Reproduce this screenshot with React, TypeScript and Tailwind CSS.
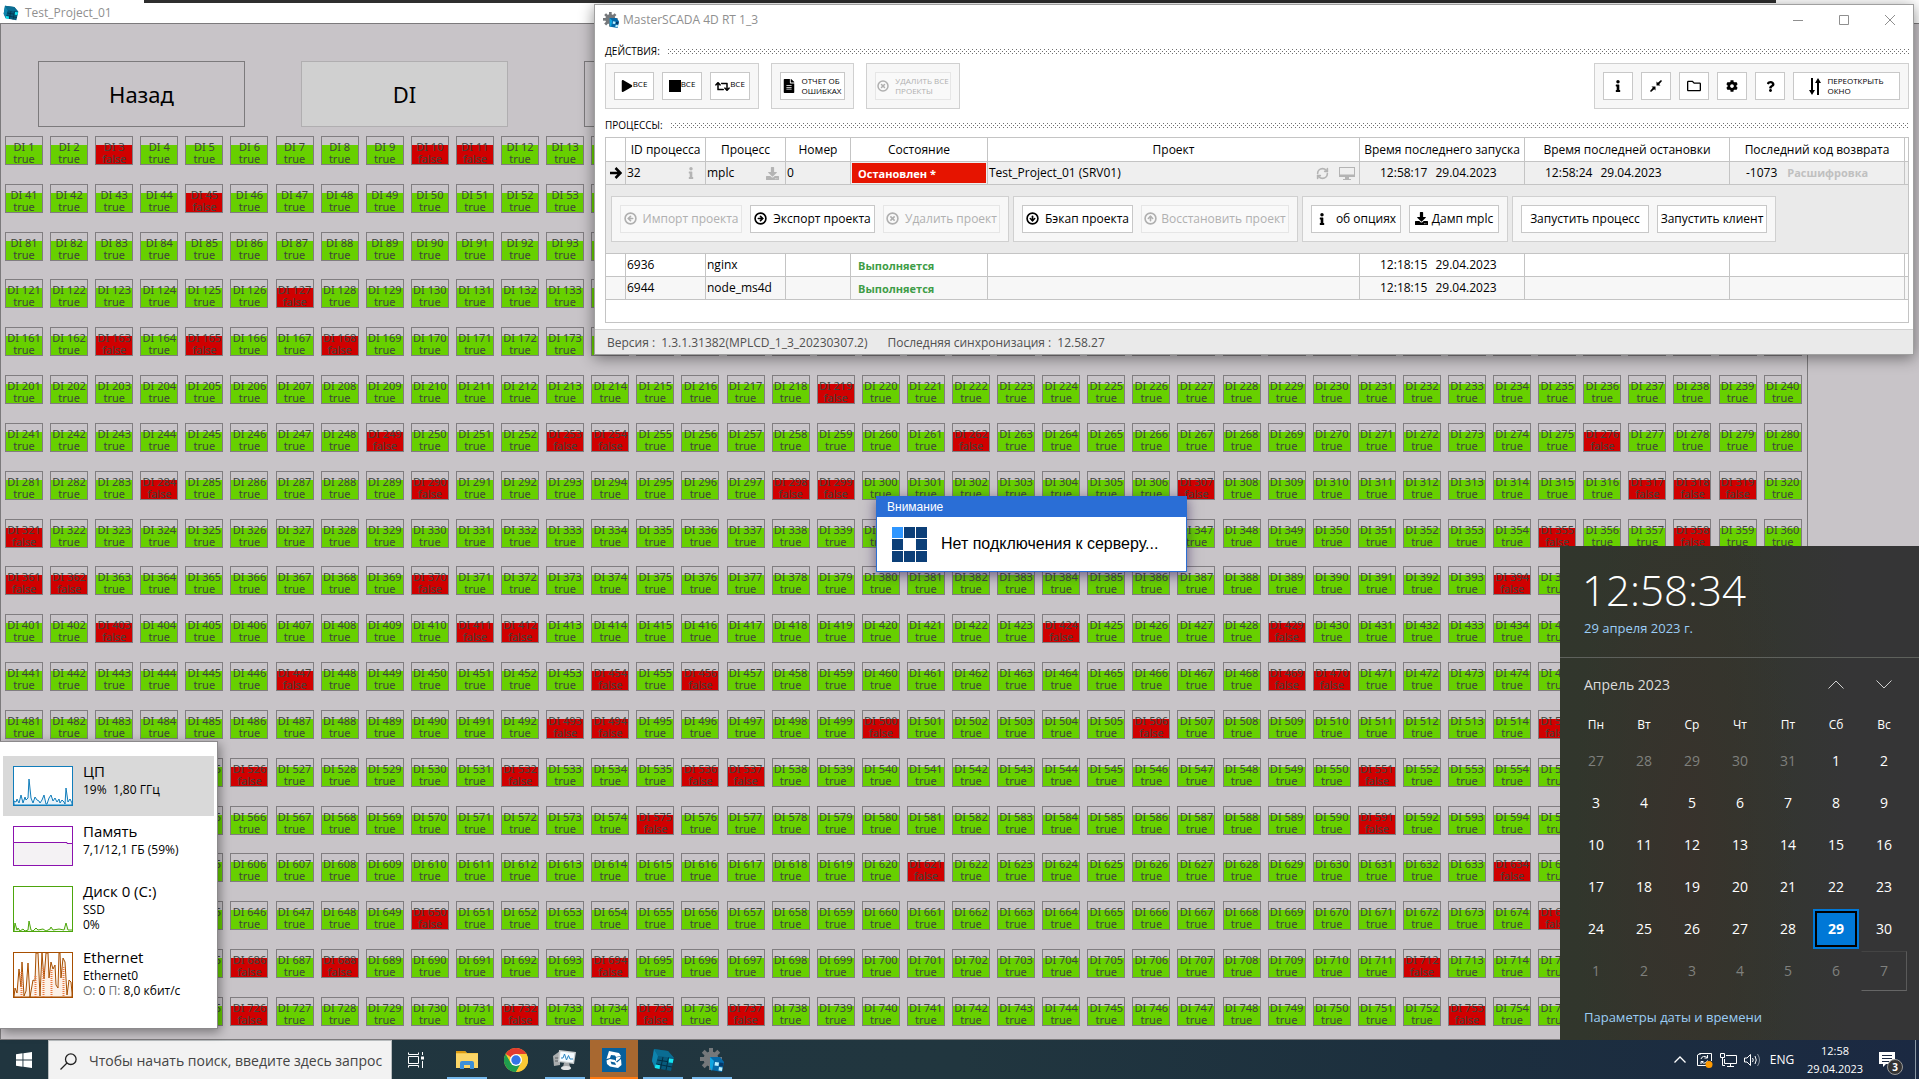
import React from "react";
import { CircleArrowDown, CircleArrowLeft, CircleArrowRight, CircleArrowUp, CircleX, RefreshCw } from "lucide-react";
import { FaCog, FaDownload, FaFileAlt, FaInfo, FaPlay, FaQuestion, FaRegFolder, FaRetweet } from "react-icons/fa";

const FALSE_INPUTS = new Set([
  3, 10, 11, 45, 127, 163, 165, 168, 176, 178, 181, 193, 196, 219, 249, 253, 254, 262, 276, 284, 290, 298, 299, 307,
  317, 318, 319, 321, 355, 358, 361, 362, 370, 394, 403, 411, 412, 424, 429, 447, 454, 456, 469, 470, 493, 494, 500,
  506, 515, 526, 532, 536, 537, 551, 575, 591, 621, 634, 650, 675, 686, 688, 694, 712, 726, 732, 735, 737, 753,
]);

const ROWS = Array.from({ length: 19 }, (_, r) => Array.from({ length: 40 }, (_, c) => r * 40 + c + 1));

function InputCell({ n }: { n: number }) {
  const off = FALSE_INPUTS.has(n);
  return (
    <div
      className={
        "flex h-[29px] w-[38px] flex-col items-center whitespace-nowrap border border-[#807d80] pt-1 text-[11px] leading-3 text-[#40443c] " +
        (off
          ? "bg-[linear-gradient(to_bottom,#c8c4c8_8px,#d00000_8px)]"
          : "bg-[linear-gradient(to_bottom,#c8c4c8_8px,#67d000_8px)]")
      }
    >
      <span>DI {n}</span>
      <span>{off ? "false" : "true"}</span>
    </div>
  );
}

function CubeIcon({ className }: { className: string }) {
  return (
    <svg viewBox="0 0 24 24" className={className} aria-hidden="true">
      <path d="M3 1 L17 3 L23 10 L20 23 L4 20 L1 13Z" fill="#075a7c" />
      <path d="M3 1 L17 3 L23 10 L7 8Z" fill="#0a6d93" />
      <path d="M3 1 L7 8 L4 20 L1 13Z" fill="#0e84ad" />
      <path d="M6.300 12 L22 14.500 M5.200 16 L21 19 M12 9 L9.500 21 M17.500 9.500 L15 22" stroke="#022f45" strokeWidth="1" />
      <path d="M18 10.500 L22.500 11 L21.800 15 L17.500 14.500Z M4.500 16.500 L9 17.300 L8.500 21 L3.800 20Z" fill="#16e6f2" />
    </svg>
  );
}

function GearCubeIcon({ className }: { className: string }) {
  return (
    <svg viewBox="0 0 24 24" className={className} aria-hidden="true">
      <g fill="#75787b">
        <circle cx="11" cy="11" r="7.500" />
        {[0, 45, 90, 135, 180, 225, 270, 315].map((a) => (
          <rect key={a} x="9" y="0" width="4" height="6" transform={`rotate(${a} 11 11)`} />
        ))}
      </g>
      <path d="M10 9 L20 9 L24 14 L22 24 L11 22Z" fill="#0669a8" />
      <path d="M10 9 L14 13 L12 23 L10 20Z" fill="#10a5e0" />
      <path d="M15 14 L19 14.500 L18.500 18 L14.500 17.500Z M19 19 L22.500 19.500 L22 23 L18.500 22.500Z" fill="#b9efff" />
      <path d="M19.500 14.500 L23.500 15 L23 18.500 L19 18Z" fill="#053a6b" />
    </svg>
  );
}

function Dots({ id }: { id: string }) {
  return (
    <svg className="h-[5px] flex-1" aria-hidden="true">
      <pattern id={id} width="4" height="4" patternUnits="userSpaceOnUse">
        <rect x="0" y="0" width="1" height="1" fill="#6f6f6f" />
        <rect x="2" y="2" width="1" height="1" fill="#6f6f6f" />
      </pattern>
      <rect width="100%" height="5" fill={`url(#${id})`} />
    </svg>
  );
}

function Section({ title, id }: { title: string; id: string }) {
  return (
    <div className="flex h-4 items-center gap-2">
      <h2 className="text-[10px] leading-4 text-black">{title}</h2>
      <Dots id={id} />
    </div>
  );
}

function Group({ children, className = "" }: { children: React.ReactNode; className?: string }) {
  return (
    <div className={"flex h-[46px] items-center gap-2 border border-[#d0d0d0] bg-[#f7f7f7] px-2 " + className}>{children}</div>
  );
}

function Btn({
  children,
  className = "",
  disabled = false,
  label,
}: {
  children: React.ReactNode;
  className?: string;
  disabled?: boolean;
  label?: string;
}) {
  return (
    <button
      type="button"
      disabled={disabled}
      aria-label={label}
      className={
        "flex h-7 shrink-0 items-center justify-center whitespace-nowrap border " +
        (disabled ? "border-[#e6e6e6] bg-[#f9f9f9] text-[#b0b0b0] " : "border-[#c8c8c8] bg-white text-black ") +
        className
      }
    >
      {children}
    </button>
  );
}

function Toolbar() {
  return (
    <div className="flex gap-3 pt-1">
      <Group>
        <Btn className="w-10">
          <FaPlay className="size-3" />
          <span className="pb-1 text-[8px]">ВСЕ</span>
        </Btn>
        <Btn className="w-10">
          <span className="size-3 bg-black" />
          <span className="pb-1 text-[8px]">ВСЕ</span>
        </Btn>
        <Btn className="w-10">
          <FaRetweet className="size-[15px]" />
          <span className="pb-1 text-[8px]">ВСЕ</span>
        </Btn>
      </Group>
      <Group>
        <Btn className="w-[65px] gap-1.5">
          <FaFileAlt className="h-3.5 w-3" />
          <span className="text-left text-[8px] leading-[10px]">
            ОТЧЕТ ОБ
            <br />
            ОШИБКАХ
          </span>
        </Btn>
      </Group>
      <Group className="mr-auto">
        <Btn disabled className="w-[76px] gap-1.5">
          <CircleX className="size-3" strokeWidth={3} />
          <span className="text-left text-[8px] leading-[10px]">
            УДАЛИТЬ ВСЕ
            <br />
            ПРОЕКТЫ
          </span>
        </Btn>
      </Group>
      <Group>
        <Btn label="Информация" className="w-[30px]">
          <FaInfo className="size-3" />
        </Btn>
        <Btn label="Свернуть" className="w-[30px]">
          <svg viewBox="0 0 12 12" className="size-3" aria-hidden="true">
            <path d="M6.500 1.500 V5.500 H10.500 L9.200 4.200 L12 1 L11 0 L7.800 2.800Z M5.500 10.500 V6.500 H1.500 L2.800 7.800 L0 11 L1 12 L4.200 9.200Z" />
          </svg>
        </Btn>
        <Btn label="Папка" className="w-[30px]">
          <FaRegFolder className="size-3.5" />
        </Btn>
        <Btn label="Настройки" className="w-[30px]">
          <FaCog className="size-3" />
        </Btn>
        <Btn label="Справка" className="w-[30px]">
          <FaQuestion className="size-[11px]" />
        </Btn>
        <Btn className="w-[107px] gap-1.5">
          <svg viewBox="0 0 12 17" className="h-[17px] w-3" aria-hidden="true">
            <path d="M2 0 H4 V12 H6 L3 17 L0 12 H2Z M8 17 H10 V5 H12 L9 0 L6 5 H8Z" />
          </svg>
          <span className="text-left text-[8px] leading-[10px]">
            ПЕРЕОТКРЫТЬ
            <br />
            ОКНО
          </span>
        </Btn>
      </Group>
    </div>
  );
}

function ProcessTable() {
  const cell = "border-r border-b border-[#c4c4c4] p-0 ";
  const others = [
    { id: "6936", name: "nginx", bg: "bg-white" },
    { id: "6944", name: "node_ms4d", bg: "bg-[#f7f7f7]" },
  ];
  return (
    <div className="h-[186px] border border-[#c4c4c4] bg-white">
      <table className="w-full table-fixed border-separate border-spacing-0 text-[12px] leading-4 text-black">
        <colgroup>
          <col className="w-5" />
          <col className="w-20" />
          <col className="w-20" />
          <col className="w-[65px]" />
          <col className="w-[137px]" />
          <col />
          <col className="w-[165px]" />
          <col className="w-[205px]" />
          <col className="w-[175px]" />
          <col className="w-[3px]" />
        </colgroup>
        <thead>
          <tr className="h-6">
            {["", "ID процесса", "Процесс", "Номер", "Состояние", "Проект", "Время последнего запуска", "Время последней остановки", "Последний код возврата"].map(
              (h) => (
                <th key={h} className={cell + "whitespace-nowrap text-center font-normal"}>
                  {h}
                </th>
              ),
            )}
            <th className="border-b border-[#c4c4c4] p-0" />
          </tr>
        </thead>
        <tbody>
          <tr className="h-[23px] bg-[#efefef]">
            <td className={cell}>
              <svg viewBox="0 0 12 12" className="ml-1 size-3" aria-hidden="true">
                <path d="M0 6 H10 M5.500 1 L10.500 6 L5.500 11" fill="none" stroke="#000" strokeWidth="2.500" />
              </svg>
            </td>
            <td className={cell}>
              <div className="flex items-center justify-between pl-px pr-2">
                32 <FaInfo className="size-3 text-[#b4b4b4]" />
              </div>
            </td>
            <td className={cell}>
              <div className="flex items-center justify-between pl-px pr-1.5">
                mplc <FaDownload className="size-[13px] text-[#b4b4b4]" />
              </div>
            </td>
            <td className={cell}>
              <div className="pl-px">0</div>
            </td>
            <td className={cell}>
              <div className="mx-px flex h-5 items-center bg-[#e61400] pl-1.5 pt-0.5 text-[11px] font-bold text-white">
                Остановлен *
              </div>
            </td>
            <td className={cell}>
              <div className="flex items-center pl-px pr-1">
                <span className="mr-auto">Test_Project_01 (SRV01)</span>
                <RefreshCw className="mr-2.5 size-[13px] text-[#b4b4b4]" strokeWidth={3} />
                <svg viewBox="0 0 16 13" className="h-[13px] w-4" fill="#b4b4b4" aria-hidden="true">
                  <path fillRule="evenodd" d="M0 0 H16 V10 H0Z M1 1 V7.500 H15 V1Z" />
                  <path d="M6 10 H10 V12 H12 V13 H4 V12 H6Z" />
                </svg>
              </div>
            </td>
            <td className={cell}>
              <div className="flex gap-2 pl-5">
                <span>12:58:17</span>
                <span>29.04.2023</span>
              </div>
            </td>
            <td className={cell}>
              <div className="flex gap-2 pl-5">
                <span>12:58:24</span>
                <span>29.04.2023</span>
              </div>
            </td>
            <td className={cell}>
              <div className="flex gap-2.5 pl-4">
                <span>-1073</span>
                <span className="text-[11px] font-bold text-[#c0c0c0]">Расшифровка</span>
              </div>
            </td>
            <td className="border-b border-[#c4c4c4] p-0" />
          </tr>
          <tr className="h-[69px]">
            <td colSpan={10} className="border-b border-[#c4c4c4] bg-[#eaeaea] p-0">
              <div className="flex gap-1 pb-px pl-[5px]">
                <Group>
                  <Btn disabled className="w-[122px] gap-1.5">
                    <CircleArrowLeft className="size-[13px]" strokeWidth={3} />
                    Импорт проекта
                  </Btn>
                  <Btn className="w-[125px] gap-1.5">
                    <CircleArrowRight className="size-[13px]" strokeWidth={3} />
                    Экспорт проекта
                  </Btn>
                  <Btn disabled className="w-[117px] gap-1.5">
                    <CircleX className="size-[13px]" strokeWidth={3} />
                    Удалить проект
                  </Btn>
                </Group>
                <Group>
                  <Btn className="w-[111px] gap-1.5">
                    <CircleArrowDown className="size-[13px]" strokeWidth={3} />
                    Бэкап проекта
                  </Btn>
                  <Btn disabled className="w-[148px] gap-1">
                    <CircleArrowUp className="size-[13px]" strokeWidth={3} />
                    Восстановить проект
                  </Btn>
                </Group>
                <Group>
                  <Btn className="w-[90px] gap-2">
                    <FaInfo className="size-3" />
                    об опциях
                  </Btn>
                  <Btn className="w-[90px] gap-1">
                    <FaDownload className="size-[13px]" />
                    Дамп mplc
                  </Btn>
                </Group>
                <Group>
                  <Btn className="w-32">Запустить процесс</Btn>
                  <Btn className="w-[110px]">Запустить клиент</Btn>
                </Group>
              </div>
            </td>
          </tr>
          {others.map((p) => (
            <tr key={p.id} className={"h-[23px] " + p.bg}>
              <td className={cell} />
              <td className={cell}>
                <div className="pl-px">{p.id}</div>
              </td>
              <td className={cell}>
                <div className="pl-px">{p.name}</div>
              </td>
              <td className={cell} />
              <td className={cell}>
                <div className="pl-[7px] pt-0.5 text-[11px] font-bold text-[#3f9d48]">Выполняется</div>
              </td>
              <td className={cell} />
              <td className={cell}>
                <div className="flex gap-2 pl-5">
                  <span>12:18:15</span>
                  <span>29.04.2023</span>
                </div>
              </td>
              <td className={cell} />
              <td className={cell} />
              <td className="border-b border-[#c4c4c4] p-0" />
            </tr>
          ))}
        </tbody>
      </table>
    </div>
  );
}

function RuntimeWindow() {
  return (
    <section className="absolute left-[594px] right-[5px] top-1 border border-[#a0a0a0] bg-white shadow-[0_3px_14px_rgba(0,0,0,0.45)]">
      <header className="flex h-[30px] items-center pl-2">
        <GearCubeIcon className="size-4" />
        <h1 className="mr-auto pl-1 text-[12px] leading-4 text-[#8f8f8f]">MasterSCADA 4D RT 1_3</h1>
        <button type="button" aria-label="Свернуть окно" className="flex h-7 w-[46px] items-center justify-center">
          <svg viewBox="0 0 10 10" className="size-2.5" stroke="#8f8f8f">
            <path d="M0 5.500 H10" />
          </svg>
        </button>
        <button type="button" aria-label="Развернуть окно" className="flex h-7 w-[46px] items-center justify-center">
          <svg viewBox="0 0 10 10" className="size-2.5" stroke="#8f8f8f" fill="none">
            <path d="M0.500 0.500 H9.500 V9.500 H0.500Z" />
          </svg>
        </button>
        <button type="button" aria-label="Закрыть окно" className="flex h-7 w-[46px] items-center justify-center">
          <svg viewBox="0 0 10 10" className="size-2.5" stroke="#8f8f8f">
            <path d="M0 0 L10 10 M10 0 L0 10" />
          </svg>
        </button>
      </header>
      <div className="px-[10px] pb-1.5 pr-1 pt-2">
        <Section title="ДЕЙСТВИЯ:" id="dots-actions" />
        <Toolbar />
        <div className="pb-1 pt-2">
          <Section title="ПРОЦЕССЫ:" id="dots-processes" />
        </div>
        <ProcessTable />
      </div>
      <footer className="flex h-[25px] items-center gap-5 border-t border-[#d0d0d0] bg-[#eaeaea] pl-3 pt-px text-[12px] leading-4 text-[#505050]">
        <span className="flex gap-1.5">
          <span>Версия :</span>
          <span>1.3.1.31382(MPLCD_1_3_20230307.2)</span>
        </span>
        <span className="flex gap-1.5">
          <span>Последняя синхронизация :</span>
          <span>12.58.27</span>
        </span>
      </footer>
    </section>
  );
}

function AlertDialog() {
  return (
    <section
      role="dialog"
      aria-label="Внимание"
      className="absolute left-[876px] top-[496px] w-[311px] border border-[#2a6ed4] bg-white font-['Liberation_Sans',sans-serif] shadow-[0_3px_12px_rgba(40,20,80,0.6)]"
    >
      <h2 className="h-5 bg-[#2a6ed6] pl-[10px] text-[12px] leading-5 text-white">Внимание</h2>
      <div className="flex h-[54px] items-center gap-[14px] pl-[15px]">
        <div className="grid grid-cols-3 gap-px">
          {Array.from({ length: 9 }, (_, i) => (
            <span key={i} className={"size-[11px] " + (i === 0 ? "bg-[#2e96ff]" : i === 4 ? "bg-white" : "bg-[#0c3f78]")} />
          ))}
        </div>
        <p className="text-[16px] leading-5 text-black">Нет подключения к серверу...</p>
      </div>
    </section>
  );
}

function Metric({
  title,
  lines,
  chart,
  className = "",
}: {
  title: string;
  lines: React.ReactNode[];
  chart: React.ReactNode;
  className?: string;
}) {
  return (
    <div className={"mx-[3px] flex gap-[10px] pl-[10px] " + className}>
      <div className="pt-[10px]">{chart}</div>
      <div className="pt-1">
        <h3 className="text-[15px] leading-[22px] text-black">{title}</h3>
        {lines.map((l, i) => (
          <p key={i} className="whitespace-pre text-[12px] leading-[15px] text-black">
            {l}
          </p>
        ))}
      </div>
    </div>
  );
}

function PerformancePanel() {
  return (
    <section className="absolute bottom-[50px] left-0 h-[288px] w-[218px] border border-l-0 border-[#8c8a8c] bg-white pt-[14px] shadow-[2px_3px_10px_rgba(0,0,0,0.4)]">
      <Metric
        title="ЦП"
        lines={["19%  1,80 ГГц"]}
        className="h-[60px] bg-[#d9d9d9]"
        chart={
          <svg viewBox="0 0 60 40" className="h-10 w-[60px]" stroke="#117dbb">
            <rect x="0.500" y="0.500" width="59" height="39" fill="#fff" />
            <path
              fill="#e8f3fa"
              d="M1 39 L1 35 L3 36 L4 33 L6 37 L8 29 L10 37 L12 31 L13 34 L15 32 L16 13 L18 32 L20 37 L22 31 L24 34 L26 35 L27 37 L29 34 L31 29 L33 38 L34 38 L36 32 L38 29 L40 35 L42 32 L44 36 L46 33 L47 37 L49 34 L51 36 L52 38 L53 22 L55 36 L57 33 L59 37 L59 39Z"
            />
          </svg>
        }
      />
      <Metric
        title="Память"
        lines={["7,1/12,1 ГБ (59%)"]}
        className="h-[60px]"
        chart={
          <svg viewBox="0 0 60 40" className="h-10 w-[60px]" stroke="#8b12ae">
            <rect x="0.500" y="0.500" width="59" height="39" fill="#fff" />
            <path fill="#f4f2f4" d="M0.500 39.500 V16.500 H54 V17.500 H59.500 V39.500Z" />
          </svg>
        }
      />
      <Metric
        title="Диск 0 (C:)"
        lines={["SSD", "0%"]}
        className="h-[66px]"
        chart={
          <svg viewBox="0 0 60 46" className="h-[46px] w-[60px]" stroke="#4da60c">
            <rect x="0.500" y="0.500" width="59" height="45" fill="#fff" />
            <path
              fill="#eaf5e0"
              d="M1 45 L2 37 L4 44 L5 42 L7 45 L10 43 L12 45 L15 44 L16 35 L18 44 L20 45 L23 42 L25 44 L30 43 L33 45 L37 43 L38 41 L40 44 L46 43 L51 44 L53 37 L55 44 L59 44"
            />
          </svg>
        }
      />
      <Metric
        title="Ethernet"
        lines={[
          "Ethernet0",
          <>
            <span className="text-[#707070]">О:</span> 0 <span className="text-[#707070]">П:</span> 8,0 кбит/с
          </>,
        ]}
        className="h-[66px]"
        chart={
          <svg viewBox="0 0 60 46" className="h-[46px] w-[60px]" stroke="#a74f01">
            <rect x="0.500" y="0.500" width="59" height="45" fill="#fff" />
            <path
              fill="#fcf0e6"
              d="M1 45 L2 36 L4 41 L6 17 L8 35 L9 10 L11 44 L13 39 L15 11 L17 45 L20 28 L22 29 L23 1 L25 1 L27 44 L29 1 L31 27 L33 1 L35 1 L36 26 L38 10 L40 17 L42 13 L43 33 L45 36 L46 1 L47 1 L48 26 L50 6 L52 10 L54 43 L56 28 L58 30 L59 41 L59 45Z"
            />
            <path stroke="#e87a44" strokeDasharray="1 1" strokeWidth="2" d="M8.500 20 V45 M22.500 24 V45 M30.500 16 V45 M38.500 18 V45 M50.500 15 V45" />
          </svg>
        }
      />
    </section>
  );
}

const DAYS = Array.from({ length: 42 }, (_, i) => {
  const offset = i - 4;
  if (offset <= 0) return { n: 31 + offset, other: true };
  if (offset > 30) return { n: offset - 30, other: true };
  return { n: offset, other: false };
});

function Calendar() {
  return (
    <section className="absolute bottom-[39px] right-0 h-[494px] w-[359px] bg-[#333434] bg-[radial-gradient(ellipse_110px_420px_at_125px_300px,#38322c,transparent),linear-gradient(to_right,#31362c_0%,#32362d_45%,#353536_80%)] text-white">
      <div className="h-28 border-b border-[#5e615c] pl-[22px] pt-[18px]">
        <p className="text-[42px] leading-[52px] font-light">12:58:34</p>
        <a href="#date" className="block pl-0.5 pt-0.5 text-[13px] leading-5 text-[#9bcdf5]">
          29 апреля 2023 г.
        </a>
      </div>
      <div className="flex h-[53px] items-center pl-6 pr-[11px]">
        <h2 className="mr-auto text-[14px] leading-5 text-[#dcdcdc]">Апрель 2023</h2>
        <button type="button" aria-label="Предыдущий месяц" className="flex h-10 w-12 items-center justify-center">
          <svg viewBox="0 0 16 9" className="h-[9px] w-4" fill="none" stroke="#d0d0d0">
            <path d="M0.500 8.500 L8 1 L15.500 8.500" />
          </svg>
        </button>
        <button type="button" aria-label="Следующий месяц" className="flex h-10 w-12 items-center justify-center">
          <svg viewBox="0 0 16 9" className="h-[9px] w-4" fill="none" stroke="#d0d0d0">
            <path d="M0.500 0.500 L8 8 L15.500 0.500" />
          </svg>
        </button>
      </div>
      <div className="grid grid-cols-7 gap-0.5 pl-[13px] pr-3">
        {["Пн", "Вт", "Ср", "Чт", "Пт", "Сб", "Вс"].map((d) => (
          <span key={d} className="flex h-7 items-center justify-center text-[12px] leading-4">
            {d}
          </span>
        ))}
        {DAYS.map((d, i) => (
          <button
            key={i}
            type="button"
            className={
              "h-10 text-[14px] leading-5 " +
              (i === 33
                ? "border-2 border-[#0078d7] bg-[#0078d7] font-bold outline-2 -outline-offset-4 outline-black"
                : d.other
                  ? "text-[#7f807d] "
                  : "text-white ") +
              (i === 41 ? "border border-b-[#666] border-l-transparent border-r-[#5a5a5a] border-t-[#444]" : "")
            }
          >
            {d.n}
          </button>
        ))}
      </div>
      <a href="#settings" className="block pl-6 pt-4 text-[13px] leading-5 text-[#9bcdf5]">
        Параметры даты и времени
      </a>
    </section>
  );
}

function TaskButton({ label, state = "open", children }: { label: string; state?: "open" | "idle" | "alert"; children: React.ReactNode }) {
  return (
    <button
      type="button"
      aria-label={label}
      className={
        "relative flex h-full w-12 items-center justify-center " +
        (state === "alert" ? "border-b-2 border-[#ff7a10] bg-[#a86830] pt-0.5" : "")
      }
    >
      {children}
      {state === "open" && <span className="absolute inset-x-1 bottom-0 h-0.5 bg-[#76b9ed]" />}
    </button>
  );
}

function Taskbar() {
  return (
    <footer className="flex h-[39px] shrink-0 items-stretch bg-[linear-gradient(to_right,#20353f,#21363f_50%,#1c2f3e_75%,#1b2942)] text-white">
      <button type="button" aria-label="Пуск" className="flex w-12 items-center justify-center">
        <svg viewBox="0 0 16 16" className="size-4" fill="#fff">
          <path d="M0 2.200 L6.500 1.300 V7.600 H0Z M7.400 1.200 L16 0 V7.600 H7.400Z M0 8.400 H6.500 V14.700 L0 13.800Z M7.400 8.400 H16 V16 L7.400 14.800Z" />
        </svg>
      </button>
      <label className="flex w-[344px] items-center gap-3 border border-b-0 border-[#b8bcbe] bg-[#f2f2f2] pl-[11px] pt-0.5">
        <svg viewBox="0 0 17 17" className="size-[17px] shrink-0" fill="none" stroke="#222" strokeWidth="1.300">
          <circle cx="10.800" cy="6.200" r="5.300" />
          <path d="M7 10 L0.500 16.500" />
        </svg>
        <span className="sr-only">Поиск</span>
        <input
          type="text"
          placeholder="Чтобы начать поиск, введите здесь запрос"
          className="min-w-0 flex-1 bg-transparent text-[14px] leading-5 outline-none placeholder:text-[#444]"
        />
      </label>
      <button type="button" aria-label="Представление задач" className="flex w-12 items-center justify-center">
        <svg viewBox="0 0 16 16" className="size-4" fill="none" stroke="#fff">
          <path d="M0.500 0.500 V2.500 H10.500 V0.500 M0.500 15.500 V13.500 H10.500 V15.500 M0.500 4.500 H10.500 V11.500 H0.500Z M14.500 0 V3 M14.500 9 V16" />
          <path d="M13 4.500 H16 V7.500 H13Z" fill="#fff" stroke="none" />
        </svg>
      </button>
      <div className="flex gap-px pl-[3px]">
        <TaskButton label="Проводник">
          <svg viewBox="0 0 22 20" className="h-5 w-[22px]">
            <path d="M0 1 H9 L11 3 H22 V18 H0Z" fill="#f5c84c" />
            <path d="M0 1 H9 L10.500 3 H0Z" fill="#dc9a12" />
            <path d="M0 4 H22 V18 H0Z" fill="#fcd667" />
            <path d="M4 19 V13 Q4 11 6 11 H16 Q18 11 18 13 V19 H14 V15 H8 V19Z" fill="#3b8fd9" />
          </svg>
        </TaskButton>
        <TaskButton label="Chrome" state="idle">
          <svg viewBox="0 0 24 24" className="size-6">
            <circle cx="12" cy="12" r="12" fill="#fcc934" />
            <path d="M12 12 L1.600 6 A12 12 0 0 1 22.400 6 Z" fill="#e33b2e" />
            <path d="M1.600 6 A12 12 0 0 0 12 24 L17.200 15 L12 12 L6.800 15Z" fill="#1f9d4d" />
            <path d="M12 6 H22.400 A12 12 0 0 1 12 24 L17.200 15Z" fill="#fcc934" />
            <circle cx="12" cy="12" r="6" fill="#fff" />
            <circle cx="12" cy="12" r="4.700" fill="#3474e6" />
          </svg>
        </TaskButton>
        <TaskButton label="Диспетчер задач">
          <svg viewBox="0 0 24 22" className="h-[22px] w-6">
            <path d="M0 7 L7 2 V16 L1 17Z" fill="#a9adae" />
            <path d="M2 9 H6 M2 12 H6" stroke="#5c6062" />
            <path d="M6 1 L23 3 L21 15 L5 13Z" fill="#c9cdce" />
            <path d="M7.500 2.500 L21.500 4.200 L20 13.500 L6.500 11.800Z" fill="#f4fbff" />
            <path d="M8 9 L10 9 L11.500 5 L13.500 11 L15.500 6.500 L17 10 L20 10" fill="none" stroke="#2a86c4" />
            <path d="M11 14 H16 L17 18 H10Z" fill="#a5a8aa" />
            <ellipse cx="13" cy="19" rx="5" ry="2" fill="#e1e3e4" />
          </svg>
        </TaskButton>
        <TaskButton label="MasterSCADA клиент" state="alert">
          <svg viewBox="0 0 24 24" className="size-6">
            <rect width="24" height="24" fill="#075f9c" />
            <path d="M7 3 L17 5 L19 8 L14 9 L13 7.500 L9 7 L8 10 L4.500 11Z" fill="#fff" />
            <path d="M4.500 12.500 L8 11 L13 12 L15 14.500 L19 11 L19.500 17 L16 20 L8 18.500 L5 16Z M14 9.500 L19 8.500 L17.500 11 L14 13.500Z" fill="#fff" />
            <path d="M8.500 13.500 L13 14.500 L14 17 L9.500 16.200Z" fill="#075f9c" />
          </svg>
        </TaskButton>
        <TaskButton label="Test_Project_01">
          <CubeIcon className="size-6" />
        </TaskButton>
        <TaskButton label="MasterSCADA 4D RT">
          <GearCubeIcon className="size-6" />
        </TaskButton>
      </div>
      <div className="ml-auto flex items-center">
        <button type="button" aria-label="Скрытые значки" className="flex w-6 justify-center">
          <svg viewBox="0 0 12 7" className="h-[7px] w-3" fill="none" stroke="#fff" strokeWidth="1.300">
            <path d="M0.500 6.500 L6 1 L11.500 6.500" />
          </svg>
        </button>
        <button type="button" aria-label="Обновления" className="flex w-6 justify-center">
          <svg viewBox="0 0 17 16" className="h-4 w-[17px]" fill="none" stroke="#fff">
            <path d="M10 13.500 H1.500 V3 L4 1.500 H15.500 V9 M4 1.500 V3" />
            <path d="M5 7 A3.500 3.500 0 0 1 11 5.500 M11.500 3 V6 H8.500 M11.500 8.500 A3.500 3.500 0 0 1 5.500 10 M5 12 V9.500 H7.500" />
            <circle cx="13" cy="12.500" r="3.500" fill="#ff9a00" stroke="none" />
          </svg>
        </button>
        <button type="button" aria-label="Сеть" className="flex w-6 justify-center">
          <svg viewBox="0 0 17 14" className="h-3.5 w-[17px]" fill="none" stroke="#fff">
            <path d="M6 2.500 H16.500 V10.500 H4.500 V6 M10.500 10.500 V13.500 M7 13.500 H14" />
            <path d="M0.500 0.500 H4.500 V4.500 H0.500Z M2.500 4.500 V12.500 H5" />
          </svg>
        </button>
        <button type="button" aria-label="Громкость" className="flex w-6 justify-center">
          <svg viewBox="0 0 17 14" className="h-3.5 w-[17px]" fill="none" stroke="#fff">
            <path d="M0.500 5 H3 L6.500 1.500 V12.500 L3 9 H0.500Z M8.500 5 Q10 7 8.500 9 M11 3 Q13.500 7 11 11" />
            <path d="M13.500 1 Q17.500 7 13.500 13" stroke="#8a94a0" />
          </svg>
        </button>
        <span className="w-9 text-center text-[12px] leading-4">ENG</span>
        <div className="flex w-[70px] flex-col text-center text-[11px] leading-[18px]">
          <span>12:58</span>
          <span>29.04.2023</span>
        </div>
        <button type="button" aria-label="Уведомления" className="relative flex h-full w-[46px] items-center justify-center border-r border-[#8b98a4] pr-3">
          <svg viewBox="0 0 16 16" className="size-4">
            <path d="M0 0 H16 V12 H7 L4 15 V12 H0Z" fill="#fff" />
            <path d="M3 3.500 H13 M3 6.500 H13 M3 9.500 H10" stroke="#1b2942" />
          </svg>
          <span className="absolute bottom-1 right-3 flex size-4 items-center justify-center rounded-full border border-[#9a9a9a] bg-[#333] text-[10px] leading-3 font-bold">
            3
          </span>
        </button>
        <span className="w-[3px]" />
      </div>
    </footer>
  );
}

export default function App() {
  return (
    <div className="relative flex h-screen min-h-[1079px] w-full flex-col overflow-hidden bg-white font-['Open_Sans','Noto_Sans',sans-serif]">
      <div className="absolute left-36 right-[143px] top-0 h-[3px] bg-[#2e2e2e]" />
      <header className="flex h-[23px] items-center gap-1.5 pl-[3px] pt-0.5">
        <CubeIcon className="size-4" />
        <h1 className="text-[12px] leading-4 text-[#8f8f8f]">Test_Project_01</h1>
      </header>
      <main className="flex flex-1 flex-col border border-r-0 border-[#7c7a7c] bg-[#c8c4c8] font-['Noto_Sans',sans-serif]">
        <div className="mr-[111px] flex flex-1 flex-col border-r border-[#7c7a7c] pb-[13px] pl-1 pr-[5px] pt-[37px]">
          <nav className="flex gap-14 pl-[33px]">
            <button type="button" className="h-[66px] w-[207px] border border-[#7c7a7c] text-[22px] text-black">
              Назад
            </button>
            <button type="button" className="h-[66px] w-[207px] border border-[#b0aeb0] bg-[#d0d0d0] text-[22px] text-black">
              DI
            </button>
            <button type="button" className="ml-5 h-[66px] w-[207px] border border-[#7c7a7c] text-[22px] text-black">
              DO
            </button>
          </nav>
          <div className="flex flex-1 flex-col justify-between pt-[9px]">
            {ROWS.map((row) => (
              <div key={row[0]} className="flex justify-between">
                {row.map((n) => (
                  <InputCell key={n} n={n} />
                ))}
              </div>
            ))}
          </div>
        </div>
      </main>
      <Taskbar />
      <RuntimeWindow />
      <AlertDialog />
      <PerformancePanel />
      <Calendar />
    </div>
  );
}
